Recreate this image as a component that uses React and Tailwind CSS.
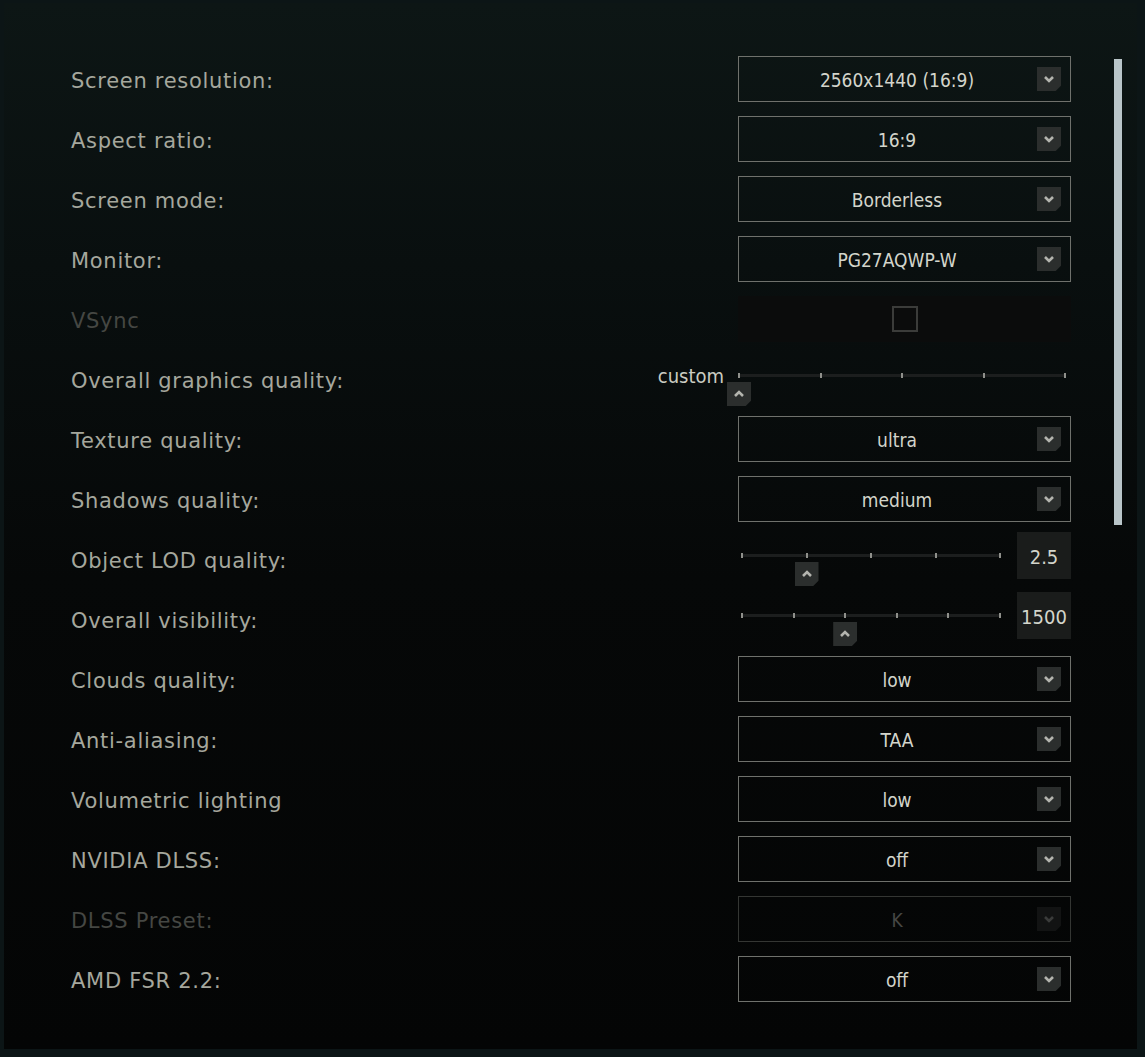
import React from 'react';

// --- Linhas de configuração gráfica ---
const rows = [
  { label: 'Screen resolution:', type: 'select', value: '2560x1440 (16:9)' },
  { label: 'Aspect ratio:', type: 'select', value: '16:9' },
  { label: 'Screen mode:', type: 'select', value: 'Borderless' },
  { label: 'Monitor:', type: 'select', value: 'PG27AQWP-W' },
  { label: 'VSync', type: 'check', disabled: true },
  { label: 'Overall graphics quality:', type: 'quality' },
  { label: 'Texture quality:', type: 'select', value: 'ultra' },
  { label: 'Shadows quality:', type: 'select', value: 'medium' },
  { label: 'Object LOD quality:', type: 'slider', value: '2.5', ticks: 5, pos: 1 },
  { label: 'Overall visibility:', type: 'slider', value: '1500', ticks: 6, pos: 2 },
  { label: 'Clouds quality:', type: 'select', value: 'low' },
  { label: 'Anti-aliasing:', type: 'select', value: 'TAA' },
  { label: 'Volumetric lighting', type: 'select', value: 'low' },
  { label: 'NVIDIA DLSS:', type: 'select', value: 'off' },
  { label: 'DLSS Preset:', type: 'select', value: 'K', disabled: true },
  { label: 'AMD FSR 2.2:', type: 'select', value: 'off' },
];

const valueFont = "font-['DejaVu_Sans_Condensed','DejaVu_Sans',sans-serif]";

function Chevron({ up = false, dim = false }) {
  return (
    <svg width="24" height="24" viewBox="0 0 24 24" className="block">
      <path
        d={up ? 'M8 14l4-4 4 4' : 'M8 10l4 4 4-4'}
        fill="none"
        stroke={dim ? '#3a3b3a' : '#b3b4ae'}
        strokeWidth="2.6"
      />
    </svg>
  );
}

function Select({ value, disabled }) {
  return (
    <div
      className={`w-[333px] h-[46px] flex items-center border ${
        disabled ? 'border-[#343633]' : 'border-[#6f716c]'
      }`}
    >
      <span
        className={`flex-1 pl-[18px] pt-[2px] text-center text-[19px] ${valueFont} ${
          disabled ? 'text-[#464744]' : 'text-[#d3d5cb]'
        }`}
      >
        {value}
      </span>
      <div
        className={`w-6 h-6 mr-[9px] [clip-path:polygon(0_0,100%_0,100%_78%,78%_100%,0_100%)] ${
          disabled ? 'bg-[#121313]' : 'bg-[#2b2e2d]'
        }`}
      >
        <Chevron dim={disabled} />
      </div>
    </div>
  );
}

function Track({ width, ticks, pos }) {
  const step = (width - 2) / (ticks - 1);
  return (
    <div className="relative h-[60px]" style={{ width }}>
      <div className="absolute left-0 right-0 top-[25px] h-[3px] bg-[#1c1e1e]" />
      {Array.from({ length: ticks }).map((_, i) => (
        <div
          key={i}
          className="absolute top-[24px] w-[2px] h-[5px] bg-[#8f908b]"
          style={{ left: i * step }}
        />
      ))}
      <div
        className="absolute top-[33px] w-6 h-6 bg-[#2b2e2d] [clip-path:polygon(0_0,100%_0,100%_78%,78%_100%,0_100%)]"
        style={{ left: pos * step - 11 }}
      >
        <Chevron up />
      </div>
    </div>
  );
}

function Control({ row }) {
  if (row.type === 'select') return <Select value={row.value} disabled={row.disabled} />;

  if (row.type === 'check') {
    return (
      <div className="w-[333px] h-[46px] flex items-center justify-center bg-[#0b0c0c]">
        <div className="w-[26px] h-[26px] border-2 border-[#3b3c3a]" />
      </div>
    );
  }

  if (row.type === 'quality') {
    return (
      <div className="flex items-start h-[60px]">
        <span className={`mt-[12px] mr-[14px] text-[20px] text-[#cbccc2] ${valueFont}`}>custom</span>
        <div className="w-[333px]">
          <Track width={328} ticks={5} pos={0} />
        </div>
      </div>
    );
  }

  // slider com caixa de valor
  return (
    <div className="w-[333px] h-[60px] flex items-start">
      <div className="ml-[3px]">
        <Track width={260} ticks={row.ticks} pos={row.pos} />
      </div>
      <div
        className={`ml-auto mt-[3px] pt-[2px] w-[54px] h-[47px] flex items-center justify-center bg-[#1a1c1b] text-[20px] text-[#d3d5cb] ${valueFont}`}
      >
        {row.value}
      </div>
    </div>
  );
}

export default function App() {
  return (
    <div className="w-[1145px] h-[1057px] bg-[#0c1516] pl-1 pt-[3px] pr-2 pb-2">
      <div className="h-full flex bg-[linear-gradient(180deg,#0d1615_0%,#090f0f_25%,#060808_55%,#040505_100%)]">
        <div className="w-[1067px] pl-[67px] pt-[46px]">
          {rows.map((row) => (
            <div key={row.label} className="h-[60px] flex items-center justify-between">
              <span
                className={`pt-[5px] text-[21px] tracking-[0.7px] font-['DejaVu_Sans',sans-serif] ${
                  row.disabled ? 'text-[#454743]' : 'text-[#a5a79d]'
                }`}
              >
                {row.label}
              </span>
              <Control row={row} />
            </div>
          ))}
        </div>
        <div className="ml-[43px] mt-[56px] w-2 h-[466px] bg-[#b9c5c9]" />
      </div>
    </div>
  );
}
